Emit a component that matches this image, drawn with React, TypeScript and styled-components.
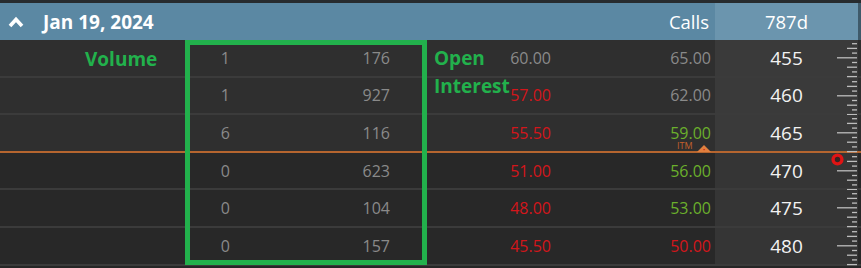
import React from "react";
import styled, {createGlobalStyle} from "styled-components";

type Tone = "gray" | "red" | "green"

type ChainRow = {
    vol: string, oi: string,
    bid: string, bidTone: Tone,
    ask: string, askTone: Tone,
    strike: string, itm: boolean
}

const rows: ChainRow[] = [
    {vol: "1", oi: "176", bid: "60.00", bidTone: "gray", ask: "65.00", askTone: "gray", strike: "455", itm: true},
    {vol: "1", oi: "927", bid: "57.00", bidTone: "red", ask: "62.00", askTone: "gray", strike: "460", itm: true},
    {vol: "6", oi: "116", bid: "55.50", bidTone: "red", ask: "59.00", askTone: "green", strike: "465", itm: true},
    {vol: "0", oi: "623", bid: "51.00", bidTone: "red", ask: "56.00", askTone: "green", strike: "470", itm: false},
    {vol: "0", oi: "104", bid: "48.00", bidTone: "red", ask: "53.00", askTone: "green", strike: "475", itm: false},
    {vol: "0", oi: "157", bid: "45.50", bidTone: "red", ask: "50.00", askTone: "red", strike: "480", itm: false},
]

const toneColor: Record<Tone, string> = {gray: "#8a8a8a", red: "#d3161b", green: "#6bb02c"}

// ruler ticks drawn on the right side of every strike cell
const tickLengths = [5, 10, 5, 20, 5, 10, 5, 10]

const Ruler = () => (
    <RulerSvg width="22" height="38" viewBox="0 0 22 38">
        {tickLengths.map((len, i) =>
            <line key={i} x1={21 - len} x2={21} y1={3.7 + i * 4.7} y2={3.7 + i * 4.7}
                  stroke="#bdbdbd" strokeWidth="1.3"/>)}
    </RulerSvg>
)

export default function App() {
    return (
        <>
            <GlobalStyle/>
            <Frame>
                <Header>
                    <HeaderMain>
                        <svg width="16" height="12" viewBox="0 0 16 12">
                            <polyline points="2,10 8,3.5 14,10" fill="none" stroke="#fff" strokeWidth="3.6"/>
                        </svg>
                        <DateTitle>Jan 19, 2024</DateTitle>
                        <CallsTitle>Calls</CallsTitle>
                    </HeaderMain>
                    <StrikeHead>787d</StrikeHead>
                    <EdgeCell/>
                </Header>
                {rows.map((r, i) =>
                    <Row key={r.strike} $itm={r.itm} $money={i === 2}>
                        <Cell $tone="gray">{r.vol}</Cell>
                        <Cell $tone="gray">{r.oi}</Cell>
                        <Cell $tone={r.bidTone}>{r.bid}</Cell>
                        <Cell $tone={r.askTone}>{r.ask}</Cell>
                        <div/>
                        <StrikeCell $itm={r.itm}>
                            {r.strike}
                            <Ruler/>
                            {i === 3 && <PriceRing width="13" height="13" viewBox="0 0 13 13">
                                <circle cx="6.5" cy="6.5" r="4.4" fill="#3a2222" stroke="#e01414" strokeWidth="3.4"/>
                            </PriceRing>}
                        </StrikeCell>
                        {i === 2 && <ItmMarker>
                            <ItmText>ITM</ItmText>
                            <svg width="14" height="8" viewBox="0 0 14 8">
                                <polygon points="0,8 7,1 14,8" fill="#e07f3e"/>
                                <rect x="6.5" y="5" width="1.2" height="1.2" fill="#d01010"/>
                            </svg>
                        </ItmMarker>}
                    </Row>)}

                <Highlight/>
                <Note $x={85} $y={47}>Volume</Note>
                <Note $x={434} $y={46}>Open</Note>
                <Note $x={434} $y={74}>Interest</Note>
            </Frame>
        </>
    )
}

//styled-components
const GlobalStyle = createGlobalStyle`
  html, body {
    margin: 0;
    background: #1e1e1e;
  }
  body {
    font-family: "Open Sans", "Noto Sans", sans-serif;
  }
`
const Frame = styled.div`
  position: relative;
  width: 861px;
  height: 268px;
  box-sizing: border-box;
  border-top: 3px solid #272b2e;
  background: #262626;
  overflow: hidden;
`
const Header = styled.div`
  display: grid;
  grid-template-columns: 715px 143px 3px;
  height: 37px;
`
const HeaderMain = styled.div`
  display: flex;
  align-items: center;
  background: #5b88a3;
  padding: 0 6px 0 8px;
  color: #fff;
`
const DateTitle = styled.div`
  margin-left: 19px;
  font-weight: 700;
  font-size: 19px;
`
const CallsTitle = styled.div`
  margin-left: auto;
  font-size: 18.5px;
`
const StrikeHead = styled.div`
  display: flex;
  align-items: center;
  justify-content: center;
  background: #6b95ae;
  color: #fff;
  font-size: 18.5px;
`
const EdgeCell = styled.div`
  background: #3f5a6a;
`

type RowProps = { $itm: boolean, $money: boolean }
const Row = styled.div<RowProps>`
  position: relative;
  display: grid;
  grid-template-columns: 230px 160px 161px 160px 4px 143px 3px;
  align-items: center;
  height: 37.6px;
  box-sizing: border-box;
  border-bottom: 2px solid ${p => p.$money ? "#b5652f" : "#3b3b3b"};
  background: ${p => p.$itm ? "#2f2f2f" : "#282828"};
`
const Cell = styled.div<{ $tone: Tone }>`
  text-align: right;
  font-size: 16px;
  line-height: 16px;
  color: ${p => toneColor[p.$tone]};
`
const StrikeCell = styled.div<{ $itm: boolean }>`
  position: relative;
  align-self: stretch;
  display: flex;
  align-items: center;
  justify-content: center;
  background: ${p => p.$itm ? "#3a3a3a" : "#353535"};
  color: #f2f2f2;
  font-size: 19px;
`
const RulerSvg = styled.svg`
  position: absolute;
  right: 0;
  top: 0;
`
const PriceRing = styled.svg`
  position: absolute;
  left: 116px;
  top: 0;
`
const ItmMarker = styled.div`
  position: absolute;
  left: 677px;
  bottom: -1px;
  display: flex;
  align-items: flex-end;
  gap: 4px;
`
const ItmText = styled.span`
  font-size: 9px;
  line-height: 8px;
  margin-bottom: 2px;
  color: #c4612b;
`
const Highlight = styled.div`
  position: absolute;
  left: 185px;
  top: 37px;
  width: 242px;
  height: 225px;
  box-sizing: border-box;
  border: 5px solid #22b14c;
`
const Note = styled.div<{ $x: number, $y: number }>`
  position: absolute;
  left: ${p => p.$x}px;
  top: ${p => p.$y}px;
  font-weight: 700;
  font-size: 19px;
  line-height: 19px;
  color: #22b14c;
`
